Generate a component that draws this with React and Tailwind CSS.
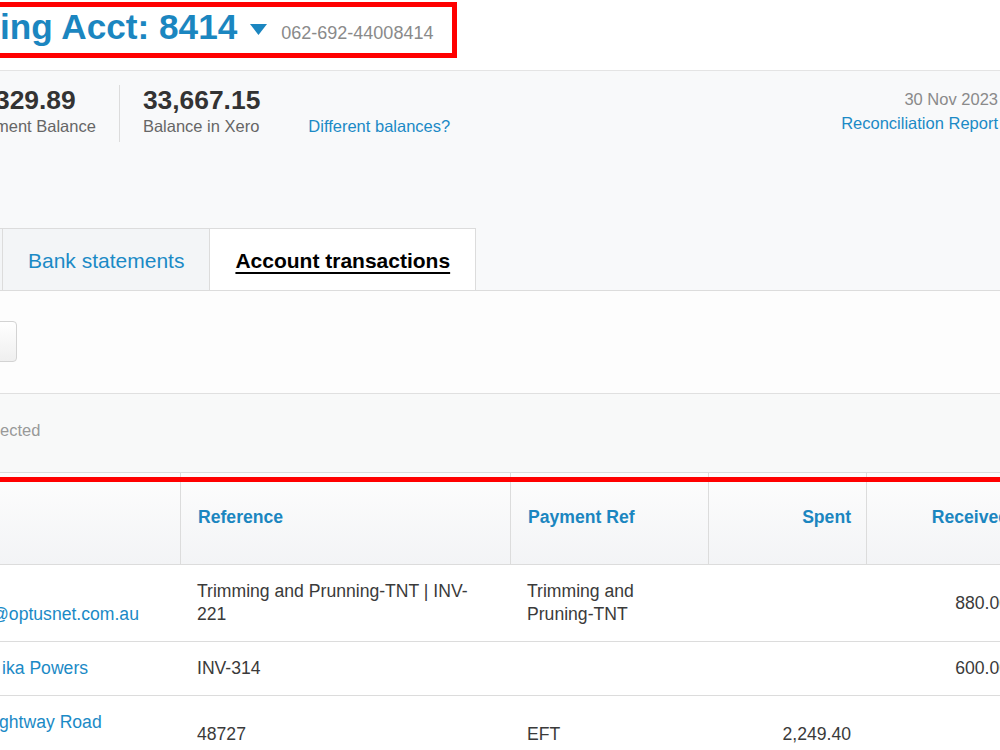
import React from 'react';

const cols = 'grid grid-cols-[180px_330px_198px_158px_158px]';

const rows = [
  {
    name: ['\u00a0', '@optusnet.com.au'],
    nameShift: '-ml-[9px]',
    reference: 'Trimming and Prunning-TNT | INV-221',
    payment: 'Trimming and Pruning-TNT',
    spent: '',
    received: '880.00',
  },
  {
    name: ['ika Powers'],
    nameShift: 'ml-[2px]',
    reference: 'INV-314',
    payment: '',
    spent: '',
    received: '600.00',
  },
  {
    name: ['ghtway Road', '\u00a0'],
    nameShift: '-ml-[1px]',
    reference: '48727',
    payment: 'EFT',
    spent: '2,249.40',
    received: '',
  },
];

const App = () => {
  return (
    <div className="w-[1000px] h-[750px] overflow-hidden relative bg-white font-['Liberation_Sans',Arial,sans-serif] text-[#333]">
      {/* Account title */}
      <header className="h-[71px] pt-[2px] border-b border-[#e4e4e4] bg-white">
        <div className="-ml-[20px] w-[477px] h-[56px] border-[5px] border-[#ff0000] pl-[15px] pt-[2px] flex items-baseline">
          <h1 className="text-[35.2px] leading-none font-bold text-[#1b86c0] whitespace-nowrap">ing Acct: 8414</h1>
          <svg className="self-start mt-[15px] ml-[13px]" width="17" height="11" viewBox="0 0 17 11">
            <polygon points="0,0 17,0 8.5,11" fill="#1b86c0" />
          </svg>
          <span className="ml-[14px] text-[18px] leading-none text-[#8a8a8a] whitespace-nowrap">062-692-44008414</span>
        </div>
      </header>

      {/* Balances + tabs */}
      <section className="bg-[#f8f9fa] pt-[14px]">
        <div className="flex items-start h-[57px]">
          <div className="-ml-[5px] whitespace-nowrap">
            <div className="text-[26.4px] leading-[30px] font-bold text-[#333]">329.89</div>
            <div className="text-[16.5px] leading-[23px] text-[#666]">ment Balance</div>
          </div>
          <div className="ml-[23px] w-px h-[57px] bg-[#dcdcdc]" />
          <div className="ml-[23px] whitespace-nowrap">
            <div className="text-[26.4px] leading-[30px] font-bold text-[#333]">33,667.15</div>
            <div className="text-[16.5px] leading-[23px] text-[#666]">Balance in Xero</div>
          </div>
          <a className="ml-[48px] mt-[30px] text-[16.5px] leading-[23px] text-[#1b8ac6] whitespace-nowrap cursor-pointer">
            Different balances?
          </a>
          <div className="ml-auto mt-[3px] pr-[2px] text-right text-[16.5px] leading-[23.5px] whitespace-nowrap">
            <div className="text-[#8a8a8a]">30 Nov 2023</div>
            <a className="text-[#1b8ac6] cursor-pointer">Reconciliation Report</a>
          </div>
        </div>

        <div className="mt-[86px] flex items-end border-b border-[#dcdcdc]">
          <div className="w-[3px] h-[62px] bg-[#f3f5f7] border-t border-r border-[#dcdcdc]" />
          <div className="h-[62px] px-[25px] pt-[2px] flex items-center bg-[#f3f5f7] border-t border-r border-[#dcdcdc] text-[21px] text-[#1b8ac6] whitespace-nowrap">
            Bank statements
          </div>
          <div className="h-[62px] px-[25px] pt-[2px] flex items-center bg-white border-t border-r border-[#dcdcdc] text-[21px] font-bold text-black underline decoration-2 underline-offset-[4px] whitespace-nowrap">
            Account transactions
          </div>
        </div>
      </section>

      {/* Toolbar */}
      <div className="h-[102px] bg-[#fdfdfd] pt-[30px]">
        <div className="-ml-[80px] w-[97px] h-[41px] rounded-[4px] border border-[#d3d3d3] bg-linear-to-b from-white to-[#efefef]" />
      </div>

      {/* Selection bar */}
      <div className="h-[79px] border-t border-[#e0e0e0] bg-[#f8f9f9] pt-[24px]">
        <span className="text-[16.5px] text-[#999]">ected</span>
      </div>

      {/* Table */}
      <div className="relative w-[1040px] border-t border-[#dcdcdc]">
        <div className={`${cols} h-[92px] border-b border-[#dcdcdc] bg-linear-to-b from-[#fdfdfd] to-[#f3f4f6] text-[17.6px] font-bold text-[#1b86c0]`}>
          <div className="flex items-center pb-[3px]" />
          <div className="flex items-center pb-[3px] pl-[17px] border-l border-[#dcdcdc]">Reference</div>
          <div className="flex items-center pb-[3px] pl-[17px] border-l border-[#dcdcdc]">Payment Ref</div>
          <div className="flex items-center justify-end pb-[3px] pr-[15px] border-l border-[#dcdcdc]">Spent</div>
          <div className="flex items-center justify-end pb-[3px] pr-[15px] border-l border-[#dcdcdc]">Received</div>
        </div>

        {rows.map((r, i) => (
          <div key={i} className={`${cols} border-b border-[#dcdcdc] bg-white text-[17.6px] leading-[23px] text-[#3a3a3a]`}>
            <div className={`py-[15px] flex flex-col justify-center text-[#1b8ac6] whitespace-nowrap ${r.nameShift}`}>
              {r.name.map((n, j) => (
                <span key={j}>{n}</span>
              ))}
            </div>
            <div className="py-[15px] pl-[17px] pr-[17px] flex items-center">{r.reference}</div>
            <div className="py-[15px] pl-[17px] pr-[17px] flex items-center">{r.payment}</div>
            <div className="py-[15px] pr-[15px] flex items-center justify-end">{r.spent}</div>
            <div className="py-[15px] pr-[15px] flex items-center justify-end">{r.received}</div>
          </div>
        ))}

        {/* annotation line over the header */}
        <div className="absolute left-0 right-0 top-[4px] h-[5px] bg-[#ff0000]" />
      </div>
    </div>
  );
};

export default App;
